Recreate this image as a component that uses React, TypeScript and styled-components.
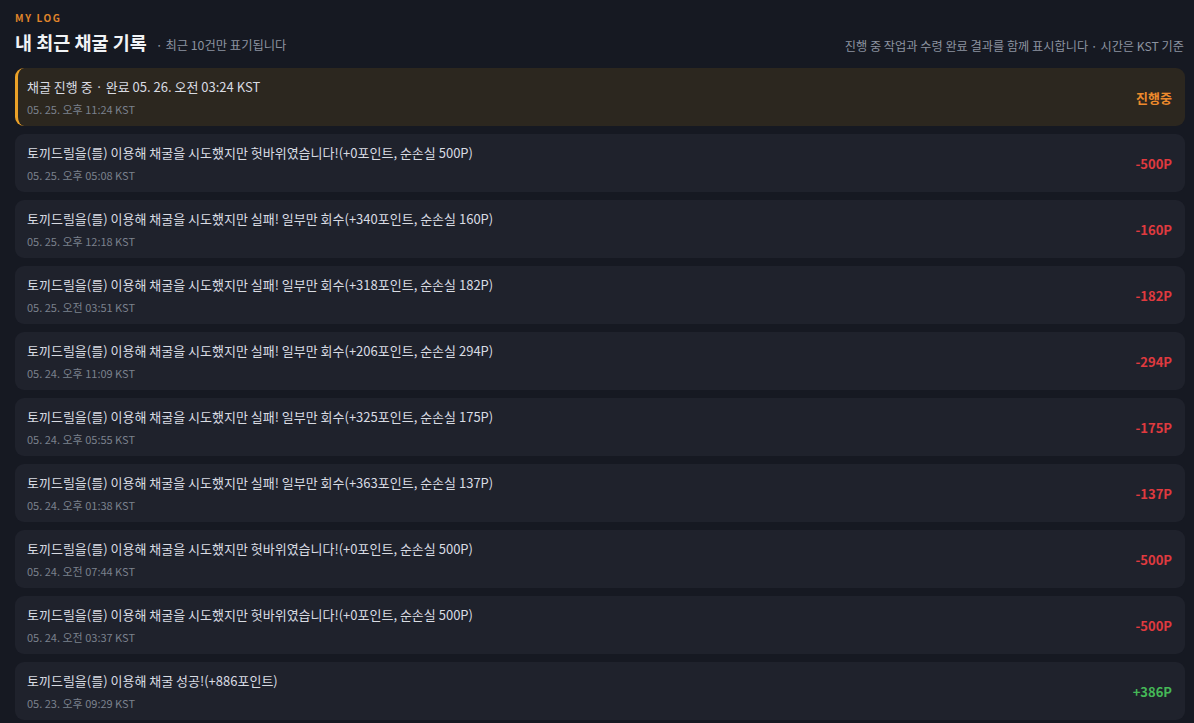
import React from "react";
import styled, { createGlobalStyle } from "styled-components";

const GlobalStyle = createGlobalStyle`
  html, body {
    margin: 0;
    padding: 0;
    background: #161922;
  }
  body {
    font-family: "Noto Sans CJK KR", "Noto Sans", sans-serif;
    color: #d7dae1;
  }
`;

const Page = styled.div`
  padding: 10px 9px 0 15px;
  box-sizing: border-box;
  width: 1194px;
`;

const Eyebrow = styled.div`
  font-size: 10px;
  font-weight: 700;
  letter-spacing: 1.6px;
  color: #e0852a;
  line-height: 16px;
`;

const HeaderRow = styled.div`
  display: flex;
  align-items: flex-end;
  justify-content: space-between;
  margin-top: 3px;
  margin-bottom: 13px;
`;

const TitleGroup = styled.div`
  display: flex;
  align-items: baseline;
  gap: 9px;
`;

const Title = styled.h1`
  margin: 0;
  font-size: 18.5px;
  font-weight: 700;
  color: #f1f3f6;
  line-height: 26px;
`;

const Sub = styled.span`
  font-size: 12.3px;
  color: #8c93a0;
`;

const Note = styled.div`
  font-size: 12.2px;
  color: #8c93a0;
  line-height: 18px;
  padding-right: 1px;
`;

const List = styled.div`
  display: flex;
  flex-direction: column;
  gap: 8px;
`;

const Card = styled.div<{ $active?: boolean }>`
  display: flex;
  align-items: center;
  justify-content: space-between;
  height: 58px;
  box-sizing: border-box;
  padding: 0 13px 0 ${(p) => (p.$active ? "9px" : "12px")};
  border-radius: 9px;
  background: ${(p) => (p.$active ? "#2c271f" : "#1f222c")};
  border-left: ${(p) => (p.$active ? "3px solid #eba128" : "none")};
`;

const Texts = styled.div`
  display: flex;
  flex-direction: column;
  gap: 6px;
`;

const Main = styled.div`
  font-size: 13px;
  color: #d9dce3;
  line-height: 19px;
`;

const Time = styled.div`
  font-size: 11px;
  color: #7b818d;
  line-height: 15px;
`;

type Tone = "pending" | "loss" | "gain";

const Amount = styled.div<{ $tone: Tone }>`
  font-size: 13px;
  font-weight: 700;
  color: ${(p) =>
    p.$tone === "pending" ? "#ec8a2c" : p.$tone === "gain" ? "#45b857" : "#e03a3f"};
`;

type Entry = { text: string; time: string; amount: string; tone: Tone; active?: boolean };

const entries: Entry[] = [
  { text: "채굴 진행 중 · 완료 05. 26. 오전 03:24 KST", time: "05. 25. 오후 11:24 KST", amount: "진행중", tone: "pending", active: true },
  { text: "토끼드릴을(를) 이용해 채굴을 시도했지만 헛바위였습니다!(+0포인트, 순손실 500P)", time: "05. 25. 오후 05:08 KST", amount: "-500P", tone: "loss" },
  { text: "토끼드릴을(를) 이용해 채굴을 시도했지만 실패! 일부만 회수(+340포인트, 순손실 160P)", time: "05. 25. 오후 12:18 KST", amount: "-160P", tone: "loss" },
  { text: "토끼드릴을(를) 이용해 채굴을 시도했지만 실패! 일부만 회수(+318포인트, 순손실 182P)", time: "05. 25. 오전 03:51 KST", amount: "-182P", tone: "loss" },
  { text: "토끼드릴을(를) 이용해 채굴을 시도했지만 실패! 일부만 회수(+206포인트, 순손실 294P)", time: "05. 24. 오후 11:09 KST", amount: "-294P", tone: "loss" },
  { text: "토끼드릴을(를) 이용해 채굴을 시도했지만 실패! 일부만 회수(+325포인트, 순손실 175P)", time: "05. 24. 오후 05:55 KST", amount: "-175P", tone: "loss" },
  { text: "토끼드릴을(를) 이용해 채굴을 시도했지만 실패! 일부만 회수(+363포인트, 순손실 137P)", time: "05. 24. 오후 01:38 KST", amount: "-137P", tone: "loss" },
  { text: "토끼드릴을(를) 이용해 채굴을 시도했지만 헛바위였습니다!(+0포인트, 순손실 500P)", time: "05. 24. 오전 07:44 KST", amount: "-500P", tone: "loss" },
  { text: "토끼드릴을(를) 이용해 채굴을 시도했지만 헛바위였습니다!(+0포인트, 순손실 500P)", time: "05. 24. 오전 03:37 KST", amount: "-500P", tone: "loss" },
  { text: "토끼드릴을(를) 이용해 채굴 성공!(+886포인트)", time: "05. 23. 오후 09:29 KST", amount: "+386P", tone: "gain" },
];

export default function App() {
  return (
    <>
      <GlobalStyle />
      <Page>
        <Eyebrow>MY LOG</Eyebrow>
        <HeaderRow>
          <TitleGroup>
            <Title>내 최근 채굴 기록</Title>
            <Sub>· 최근 10건만 표기됩니다</Sub>
          </TitleGroup>
          <Note>진행 중 작업과 수령 완료 결과를 함께 표시합니다 · 시간은 KST 기준</Note>
        </HeaderRow>
        <List>
          {entries.map((e, i) => (
            <Card key={i} $active={e.active}>
              <Texts>
                <Main>{e.text}</Main>
                <Time>{e.time}</Time>
              </Texts>
              <Amount $tone={e.tone}>{e.amount}</Amount>
            </Card>
          ))}
        </List>
      </Page>
    </>
  );
}
